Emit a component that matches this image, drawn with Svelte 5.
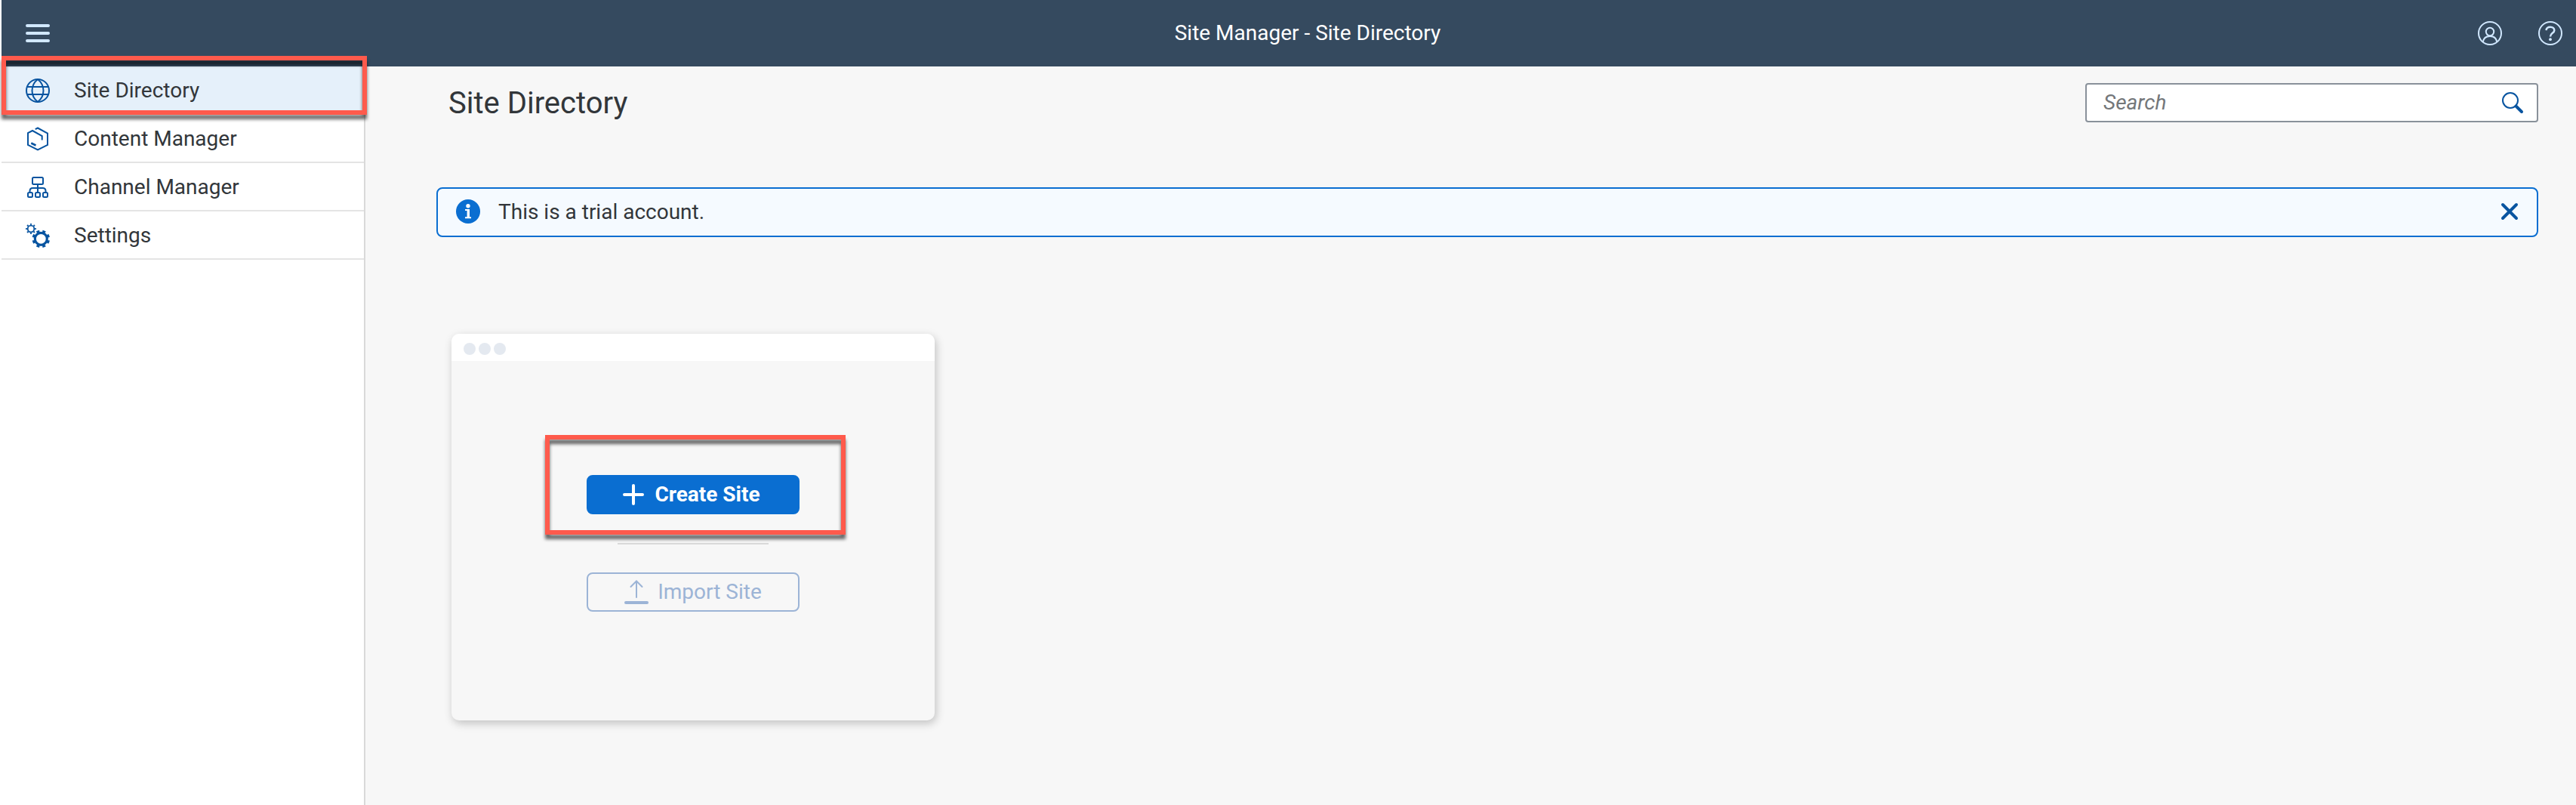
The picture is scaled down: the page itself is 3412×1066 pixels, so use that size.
<script>
  const items = [
    { label: 'Site Directory', icon: 'globe' },
    { label: 'Content Manager', icon: 'content' },
    { label: 'Channel Manager', icon: 'channel' },
    { label: 'Settings', icon: 'gears' }
  ];
  let selected = $state('Site Directory');
  let query = $state('');
  let showMessage = $state(true);
</script>

<div class="app">
  <header class="shell">
    <div class="shell-start">
      <button class="icon-button" aria-label="Toggle navigation">
        <svg viewBox="0 0 32 32" class="icon" stroke-width="4" stroke-linecap="round">
          <path d="M2 6H30M2 16H30M2 26H30" />
        </svg>
      </button>
    </div>
    <div class="shell-title">Site Manager - Site Directory</div>
    <div class="shell-end">
      <button class="icon-button" aria-label="User menu">
        <svg viewBox="0 0 32 32" class="icon">
          <circle cx="16" cy="16" r="15" />
          <circle cx="16" cy="14" r="5.2" />
          <path d="M7 27.5C7.5 22.5 11 20 16 20S24.500 22.500 25 27.500" />
        </svg>
      </button>
      <button class="icon-button" aria-label="Help">
        <svg viewBox="0 0 32 32" class="icon">
          <circle cx="16" cy="16" r="15" />
          <path stroke-width="2.500" d="M10.500 12.200C10.800 9.300 13 7.800 16 7.800C19.200 7.800 21.300 9.600 21.300 12.200C21.300 16 16 15.800 16 20.500" />
          <circle cx="16" cy="24.200" r="1.900" fill="currentColor" stroke="none" />
        </svg>
      </button>
    </div>
  </header>

  <div class="body">
    <nav class="side" aria-label="Main">
      {#each items as item (item.label)}
        <button class="side-item" class:active={selected === item.label} onclick={() => (selected = item.label)}>
          <svg viewBox="0 0 32 32" class="icon">
            {#if item.icon === 'globe'}
              <circle cx="16" cy="16" r="15" />
              <path d="M2 11H30M2 21H30" />
              <path d="M16 1C6 9 6 23 16 31C26 23 26 9 16 1Z" />
            {:else if item.icon === 'content'}
              <path d="M12.700 3.200L16 1.500L29 8.500V24L16 30.500L3 24V8L9 5L21.700 12V17.500" />
              <path stroke-width="2.500" d="M7.300 21.500L13.500 24.500" />
            {:else if item.icon === 'channel'}
              <rect x="9" y="3" width="14" height="9" rx="1.500" />
              <path d="M16 12V23M5.500 23V21Q5.500 17 9.500 17H22.500Q26.500 17 26.500 21V23" />
              <rect x="3" y="23" width="6" height="6" rx="1.500" />
              <rect x="13" y="23" width="6" height="6" rx="1.500" />
              <rect x="23" y="23" width="6" height="6" rx="1.500" />
            {:else}
              <circle cx="7" cy="7" r="4.300" stroke-width="1.800" />
              <circle cx="7" cy="7" r="6" stroke-width="2" pathLength="80" stroke-dasharray="4 6" stroke-dashoffset="2" />
              <circle cx="20.300" cy="20.300" r="8" stroke-width="3.200" />
              <circle cx="20.300" cy="20.300" r="10.300" stroke-width="3" pathLength="80" stroke-dasharray="5 5" stroke-dashoffset="-2.500" />
            {/if}
          </svg>
          <span>{item.label}</span>
          {#if item.icon === 'globe'}<span class="callout callout-nav"></span>{/if}
        </button>
      {/each}
    </nav>

    <main>
      <div class="page-head">
        <h1>Site Directory</h1>
        <form class="search" role="search" onsubmit={(e) => e.preventDefault()}>
          <input type="text" placeholder="Search" aria-label="Search" bind:value={query} />
          <button aria-label="Run search">
            <svg viewBox="0 0 32 32" class="icon">
              <circle cx="13" cy="13" r="10" />
              <path d="M20.500 20.500L28 28" stroke-width="4" stroke-linecap="round" />
            </svg>
          </button>
        </form>
      </div>

      {#if showMessage}
        <div class="message" role="status">
          <svg viewBox="0 0 32 32" class="icon info">
            <circle cx="16" cy="16" r="16" fill="currentColor" stroke="none" />
            <circle cx="16" cy="8.700" r="2.700" fill="#fff" stroke="none" />
            <path d="M12 14H17V24M12 24.200H20" stroke="#fff" stroke-width="2" />
            <path d="M16.300 13V24" stroke="#fff" stroke-width="3.400" />
          </svg>
          <span>This is a trial account.</span>
          <button aria-label="Close message" onclick={() => (showMessage = false)}>
            <svg viewBox="0 0 32 32" class="icon" stroke-linecap="round">
              <path d="M7 7L25 25M25 7L7 25" stroke-width="4" />
            </svg>
          </button>
        </div>
      {/if}

      <section class="card" aria-label="New site">
        <div class="card-bar"><i></i><i></i><i></i></div>
        <div class="card-body">
          <div class="create-wrap">
            <button class="action primary">
              <svg viewBox="0 0 32 32" class="icon" stroke-linecap="round">
                <path d="M16 4V28M4 16H28" stroke-width="4" />
              </svg>
              Create Site
            </button>
            <span class="callout callout-create"></span>
          </div>
          <hr />
          <button class="action ghost" disabled>
            <svg viewBox="0 0 32 32" class="icon" stroke-linecap="round">
              <path d="M16 2V23M8.500 9L16 1.500L23.500 9" />
              <path d="M2 30H30" stroke-width="4" />
            </svg>
            Import Site
          </button>
        </div>
      </section>
    </main>
  </div>
</div>

<style>
  :global(body) {
    background: #fff;
  }
  .app {
    box-sizing: border-box;
    min-height: 100vh;
    padding-left: 2px;
    display: flex;
    flex-direction: column;
    font-family: Roboto, 'Noto Sans', sans-serif;
    font-size: 28px;
    line-height: 32px;
    color: #32363a;
  }
  button {
    font: inherit;
    color: inherit;
    background: none;
    border: 0;
    padding: 0;
    cursor: pointer;
  }
  .icon {
    display: block;
    flex: none;
    width: 32px;
    height: 32px;
    fill: none;
    stroke: currentColor;
  }
  .icon:not([stroke-width]) {
    stroke-width: 2;
  }
  .shell {
    display: flex;
    align-items: center;
    height: 88px;
    background: #354a5f;
    color: #d1e8ff;
  }
  .shell-start {
    display: flex;
    width: 212px;
  }
  .shell-title {
    flex: 1;
    text-align: center;
    color: #fff;
  }
  .shell-end {
    display: flex;
    padding-right: 2px;
  }
  .shell-start .icon-button {
    padding: 0 32px;
  }
  .shell-end .icon-button {
    padding: 0 16px 0 32px;
  }
  .body {
    flex: 1;
    display: flex;
  }
  .side {
    box-sizing: border-box;
    flex: none;
    width: 482px;
    background: #fff;
    border-right: 2px solid #d9d9d9;
  }
  .side-item {
    position: relative;
    box-sizing: border-box;
    display: flex;
    align-items: center;
    gap: 32px;
    width: 100%;
    height: 64px;
    padding: 2px 32px 0;
    border-bottom: 2px solid #e4e4e4;
    text-align: left;
  }
  .side-item.active {
    background: #e5f0fa;
  }
  .side-item .icon {
    color: #0854a0;
  }
  .callout {
    position: absolute;
    z-index: 1;
    border: 6px solid #ff5a4c;
    filter: drop-shadow(0 6px 2px rgba(0, 0, 0, 0.6));
    pointer-events: none;
  }
  .callout-nav {
    inset: -14px -4px -2px 0;
  }
  .callout-create {
    inset: -53px -61px -27px -55px;
  }
  main {
    flex: 1;
    padding: 22px 50px 40px 94px;
    background: #f7f7f7;
  }
  .page-head {
    display: flex;
    align-items: center;
    justify-content: space-between;
    height: 52px;
    padding-left: 16px;
    margin-bottom: 86px;
  }
  h1 {
    margin: 0;
    padding-top: 2px;
    font-size: 40px;
    line-height: 48px;
    font-weight: 400;
  }
  .search {
    box-sizing: border-box;
    display: flex;
    align-items: center;
    width: 600px;
    height: 52px;
    padding: 0 16px 0 22px;
    border: 2px solid #89919a;
    border-radius: 4px;
    background: #fff;
  }
  .search input {
    flex: 1;
    min-width: 0;
    padding: 0;
    border: 0;
    outline: 0;
    background: none;
    font: inherit;
    color: inherit;
  }
  .search input::placeholder {
    color: #74777a;
    font-style: italic;
    opacity: 1;
  }
  .search button,
  .message button {
    color: #0854a0;
  }
  .message {
    box-sizing: border-box;
    display: flex;
    align-items: center;
    gap: 24px;
    height: 66px;
    padding: 0 20px 2px 24px;
    border: 2px solid #0a6ed1;
    border-radius: 8px;
    background: #f5faff;
  }
  .message .info {
    color: #0a6ed1;
  }
  .message span {
    padding-top: 2px;
  }
  .message button {
    margin-left: auto;
  }
  .card {
    box-sizing: border-box;
    width: 640px;
    height: 512px;
    margin: 128px 0 0 20px;
    border-radius: 10px;
    background: #f7f7f7;
    box-shadow: 2px 4px 12px rgba(0, 0, 0, 0.22);
    overflow: clip;
  }
  .card-bar {
    box-sizing: border-box;
    display: flex;
    align-items: center;
    gap: 4px;
    height: 36px;
    padding: 4px 16px 0;
    background: #fff;
  }
  .card-bar i {
    width: 16px;
    height: 16px;
    border-radius: 50%;
    background: #e4e9f0;
  }
  .card-body {
    display: flex;
    flex-direction: column;
    align-items: center;
    padding-top: 151px;
  }
  .create-wrap {
    position: relative;
  }
  .action {
    box-sizing: border-box;
    display: flex;
    align-items: center;
    justify-content: center;
    gap: 12px;
    width: 282px;
    height: 52px;
    border: 2px solid #0a6ed1;
    border-radius: 8px;
  }
  .primary {
    padding-right: 6px;
    background: #0a6ed1;
    color: #fff;
    font-weight: 700;
  }
  .ghost {
    border-color: #9cb4d6;
    color: #9cb4d6;
  }
  hr {
    width: 200px;
    height: 2px;
    margin: 38px 0 37px;
    border: 0;
    background: #d9d9d9;
  }
</style>
